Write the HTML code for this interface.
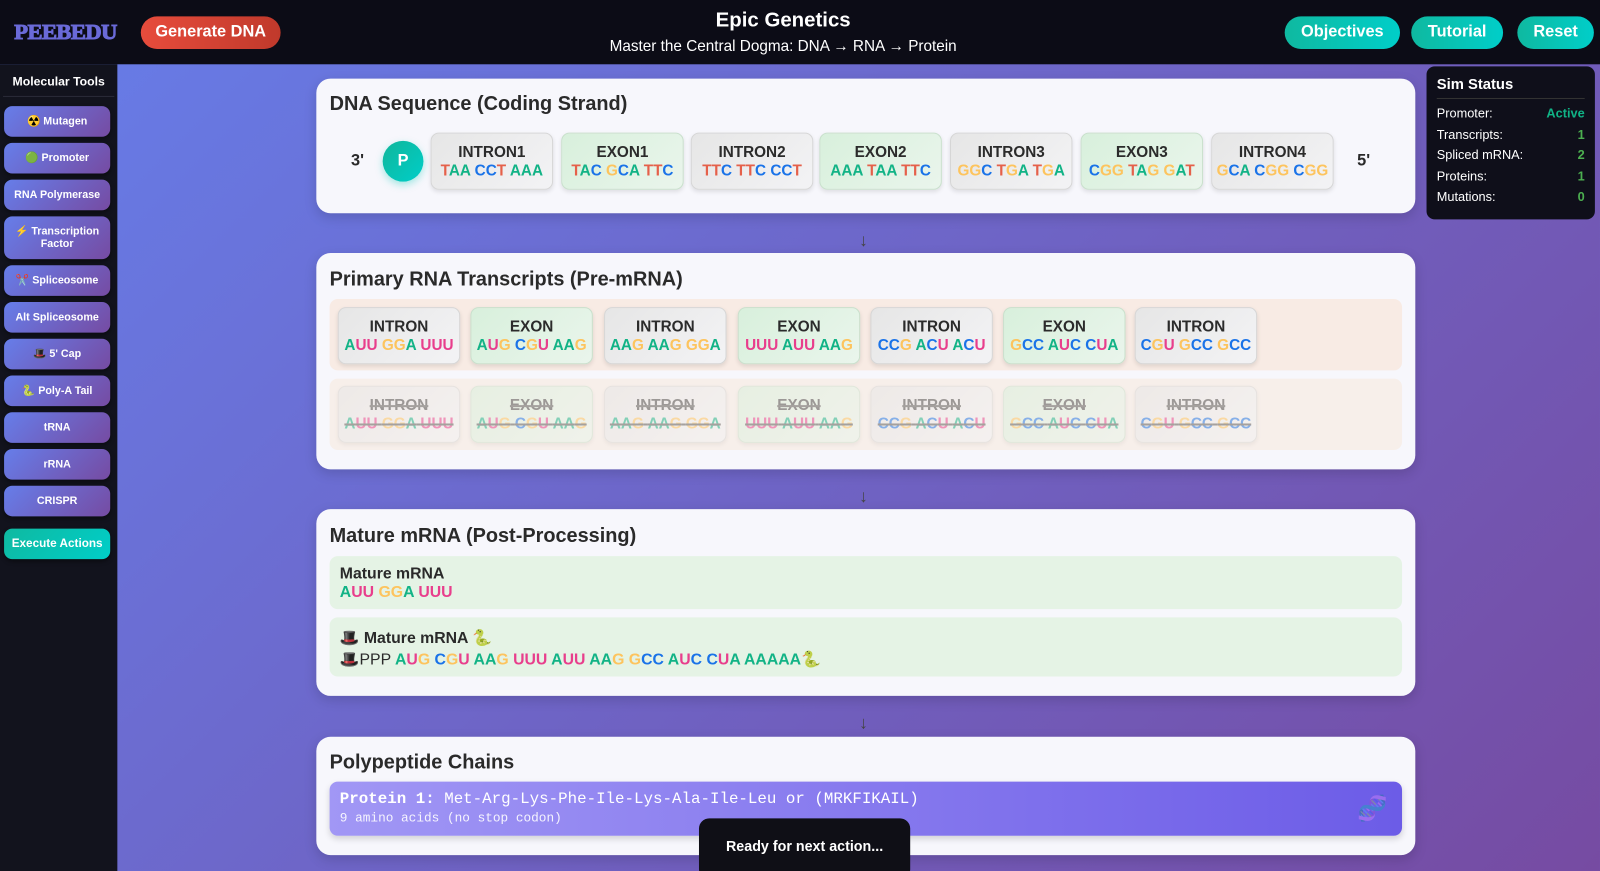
<!DOCTYPE html>
<html><head><meta charset="utf-8"><style>
*{box-sizing:border-box;margin:0;padding:0}
html,body{width:1600px;height:871px;overflow:hidden}
body{font-family:"Liberation Sans",sans-serif;background:linear-gradient(135deg,#667eea 0%,#764ba2 100%);position:relative}
#w{position:absolute;left:0;top:0;width:1568px;height:854px;transform:scale(1.020408);transform-origin:0 0}
i{font-style:normal}
.a{color:#12b386}.c{color:#1a73e8}.g{color:#fdc45e}.t{color:#e5604a}.u{color:#e83e8c}
header{position:absolute;left:0;top:0;width:1568px;height:63px;background:#0c0c16}
.logo{position:absolute;left:14px;top:19px;font-family:"Liberation Serif",serif;font-weight:900;font-size:21px;color:#6a6ad8;letter-spacing:-0.5px;-webkit-text-stroke:1px #6a6ad8;transform:scaleX(1.05);transform-origin:left}
.btn{position:absolute;top:16px;height:32px;border-radius:16px;color:#fff;font-weight:bold;font-size:16px;display:flex;align-items:center;justify-content:center}
.red{background:linear-gradient(90deg,#e74c3c,#c0392b)}
.teal{background:linear-gradient(90deg,#0fb9a0,#00cec9)}
.title{position:absolute;left:0;width:1535px;text-align:center;color:#fff}
side{position:absolute;left:0;top:63px;width:115px;height:808px;background:#12131d;display:block}
.st{color:#fff;font-weight:bold;font-size:12px;text-align:center;padding-bottom:7px;border-bottom:1px solid #2a2b38;margin:10px 3px 0}
.sb{position:absolute;left:4px;width:104px;height:30px;border-radius:8px;background:linear-gradient(135deg,#667eea,#764ba2);color:#fff;font-weight:bold;font-size:10.5px;display:flex;align-items:center;justify-content:center;text-align:center;line-height:12px;box-shadow:0 2px 4px rgba(0,0,0,.4)}
.panel{position:absolute;left:310px;width:1077px;background:#f7f7fc;border-radius:14px;box-shadow:0 4px 12px rgba(0,0,0,.15)}
.panel h2{position:absolute;left:13px;font-size:19.5px;color:#2a2a2a;font-weight:bold}
.card{position:absolute;width:120px;height:56px;border-radius:8px;text-align:center;font-weight:bold;border:1px solid #d6d6d6;box-shadow:0 2px 4px rgba(0,0,0,.1)}
.card .n{font-size:15px;color:#2b2b2b;margin-top:10px;line-height:17px}
.card .s{font-size:15px;line-height:19px}
.in{background:linear-gradient(135deg,#e6e6e6,#f3f3f5)}
.ex{background:linear-gradient(135deg,#d8f0dc,#eaf5ec);border-color:#c9e0cc}
.row{position:absolute;left:13px;width:1051px;height:70px;background:#f8ebe4;border-radius:8px}
.fd{opacity:.5}
.fd .n,.fd .s{text-decoration:line-through;text-decoration-color:#555;text-decoration-thickness:2px}
.fd .n{color:#444}
.arrow{position:absolute;left:842px;color:#444;font-size:17px}
.mm{position:absolute;left:13px;width:1051px;background:#e5f3e5;border-radius:8px;padding:9px 10px;font-size:15.5px;line-height:18px;font-weight:bold;color:#2a2a2a}
</style></head><body><div id="w">
<header>
<div class="logo">PEEBEDU</div>
<div class="btn red" style="left:138px;width:137px">Generate DNA</div>
<div class="title" style="top:9px;font-size:20px;font-weight:bold">Epic Genetics</div>
<div class="title" style="top:37px;font-size:15px">Master the Central Dogma: DNA → RNA → Protein</div>
<div class="btn teal" style="left:1259px;width:113px">Objectives</div>
<div class="btn teal" style="left:1383px;width:90px">Tutorial</div>
<div class="btn teal" style="left:1487px;width:75px">Reset</div>
</header>
<side>
<div class="st">Molecular Tools</div>
</side>
<div class="sb" style="top:104px">☢️ Mutagen</div>
<div class="sb" style="top:140px">🟢 Promoter</div>
<div class="sb" style="top:176px">RNA Polymerase</div>
<div class="sb" style="top:212px;height:42px">⚡ Transcription<br>Factor</div>
<div class="sb" style="top:260px">✂️ Spliceosome</div>
<div class="sb" style="top:296px">Alt Spliceosome</div>
<div class="sb" style="top:332px">🎩 5' Cap</div>
<div class="sb" style="top:368px">🐍 Poly-A Tail</div>
<div class="sb" style="top:404px">tRNA</div>
<div class="sb" style="top:440px">rRNA</div>
<div class="sb" style="top:476px">CRISPR</div>
<div class="sb" style="top:518px;background:linear-gradient(135deg,#0fb9a0,#00cec9);font-size:11.5px">Execute Actions</div>

<div class="panel" style="top:77px;height:132px">
<h2 style="top:14px">DNA Sequence (Coding Strand)</h2>
<div style="position:absolute;left:34px;top:72px;font-weight:bold;font-size:16px;color:#2a2a2a">3'</div>
<div style="position:absolute;left:65px;top:61px;width:40px;height:40px;border-radius:50%;background:linear-gradient(135deg,#10b69a,#00cec9);color:#fff;font-weight:bold;font-size:16px;display:flex;align-items:center;justify-content:center;box-shadow:0 3px 8px rgba(0,200,180,.35)">P</div>
<div style="position:absolute;left:1020px;top:72px;font-weight:bold;font-size:16px;color:#2a2a2a">5'</div>
<div class="card in" style="left:112px;top:53px"><div class="n">INTRON1</div><div class="s"><i class=t>T</i><i class=a>AA</i> <i class=c>CC</i><i class=t>T</i> <i class=a>AAA</i></div></div>
<div class="card ex" style="left:240px;top:53px"><div class="n">EXON1</div><div class="s"><i class=t>T</i><i class=a>A</i><i class=c>C</i> <i class=g>G</i><i class=c>C</i><i class=a>A</i> <i class=t>TT</i><i class=c>C</i></div></div>
<div class="card in" style="left:367px;top:53px"><div class="n">INTRON2</div><div class="s"><i class=t>TT</i><i class=c>C</i> <i class=t>TT</i><i class=c>C</i> <i class=c>CC</i><i class=t>T</i></div></div>
<div class="card ex" style="left:493px;top:53px"><div class="n">EXON2</div><div class="s"><i class=a>AAA</i> <i class=t>T</i><i class=a>AA</i> <i class=t>TT</i><i class=c>C</i></div></div>
<div class="card in" style="left:621px;top:53px"><div class="n">INTRON3</div><div class="s"><i class=g>GG</i><i class=c>C</i> <i class=t>T</i><i class=g>G</i><i class=a>A</i> <i class=t>T</i><i class=g>G</i><i class=a>A</i></div></div>
<div class="card ex" style="left:749px;top:53px"><div class="n">EXON3</div><div class="s"><i class=c>C</i><i class=g>GG</i> <i class=t>T</i><i class=a>A</i><i class=g>G</i> <i class=g>G</i><i class=a>A</i><i class=t>T</i></div></div>
<div class="card in" style="left:877px;top:53px"><div class="n">INTRON4</div><div class="s"><i class=g>G</i><i class=c>C</i><i class=a>A</i> <i class=c>C</i><i class=g>GG</i> <i class=c>C</i><i class=g>GG</i></div></div>
</div>
<div class="arrow" style="top:226px">↓</div>

<div class="panel" style="top:248px;height:212px">
<h2 style="top:15px">Primary RNA Transcripts (Pre-mRNA)</h2>
<div class="row" style="top:45px"></div>
<div class="row" style="top:123px;background:#f7efea"></div>
<div class="card in" style="left:21px;top:53px"><div class="n">INTRON</div><div class="s"><i class=a>A</i><i class=u>UU</i> <i class=g>GG</i><i class=a>A</i> <i class=u>UUU</i></div></div>
<div class="card ex" style="left:151px;top:53px"><div class="n">EXON</div><div class="s"><i class=a>A</i><i class=u>U</i><i class=g>G</i> <i class=c>C</i><i class=g>G</i><i class=u>U</i> <i class=a>AA</i><i class=g>G</i></div></div>
<div class="card in" style="left:282px;top:53px"><div class="n">INTRON</div><div class="s"><i class=a>AA</i><i class=g>G</i> <i class=a>AA</i><i class=g>G</i> <i class=g>GG</i><i class=a>A</i></div></div>
<div class="card ex" style="left:413px;top:53px"><div class="n">EXON</div><div class="s"><i class=u>UUU</i> <i class=a>A</i><i class=u>UU</i> <i class=a>AA</i><i class=g>G</i></div></div>
<div class="card in" style="left:543px;top:53px"><div class="n">INTRON</div><div class="s"><i class=c>CC</i><i class=g>G</i> <i class=a>A</i><i class=c>C</i><i class=u>U</i> <i class=a>A</i><i class=c>C</i><i class=u>U</i></div></div>
<div class="card ex" style="left:673px;top:53px"><div class="n">EXON</div><div class="s"><i class=g>G</i><i class=c>CC</i> <i class=a>A</i><i class=u>U</i><i class=c>C</i> <i class=c>C</i><i class=u>U</i><i class=a>A</i></div></div>
<div class="card in" style="left:802px;top:53px"><div class="n">INTRON</div><div class="s"><i class=c>C</i><i class=g>G</i><i class=u>U</i> <i class=g>G</i><i class=c>CC</i> <i class=g>G</i><i class=c>CC</i></div></div>

<div class="card in fd" style="left:21px;top:130px"><div class="n">INTRON</div><div class="s"><i class=a>A</i><i class=u>UU</i> <i class=g>GG</i><i class=a>A</i> <i class=u>UUU</i></div></div>
<div class="card ex fd" style="left:151px;top:130px"><div class="n">EXON</div><div class="s"><i class=a>A</i><i class=u>U</i><i class=g>G</i> <i class=c>C</i><i class=g>G</i><i class=u>U</i> <i class=a>AA</i><i class=g>G</i></div></div>
<div class="card in fd" style="left:282px;top:130px"><div class="n">INTRON</div><div class="s"><i class=a>AA</i><i class=g>G</i> <i class=a>AA</i><i class=g>G</i> <i class=g>GG</i><i class=a>A</i></div></div>
<div class="card ex fd" style="left:413px;top:130px"><div class="n">EXON</div><div class="s"><i class=u>UUU</i> <i class=a>A</i><i class=u>UU</i> <i class=a>AA</i><i class=g>G</i></div></div>
<div class="card in fd" style="left:543px;top:130px"><div class="n">INTRON</div><div class="s"><i class=c>CC</i><i class=g>G</i> <i class=a>A</i><i class=c>C</i><i class=u>U</i> <i class=a>A</i><i class=c>C</i><i class=u>U</i></div></div>
<div class="card ex fd" style="left:673px;top:130px"><div class="n">EXON</div><div class="s"><i class=g>G</i><i class=c>CC</i> <i class=a>A</i><i class=u>U</i><i class=c>C</i> <i class=c>C</i><i class=u>U</i><i class=a>A</i></div></div>
<div class="card in fd" style="left:802px;top:130px"><div class="n">INTRON</div><div class="s"><i class=c>C</i><i class=g>G</i><i class=u>U</i> <i class=g>G</i><i class=c>CC</i> <i class=g>G</i><i class=c>CC</i></div></div>
</div>
<div class="arrow" style="top:477px">↓</div>

<div class="panel" style="top:499px;height:183px">
<h2 style="top:15px">Mature mRNA (Post-Processing)</h2>
<div class="mm" style="top:46px;height:52px">Mature mRNA<br><i class=a>A</i><i class=u>UU</i> <i class=g>GG</i><i class=a>A</i> <i class=u>UUU</i></div>
<div class="mm" style="top:106px;height:58px;padding-top:10px;line-height:21px">🎩 Mature mRNA 🐍<br><span style="font-weight:normal">🎩PPP</span> <i class=a>A</i><i class=u>U</i><i class=g>G</i> <i class=c>C</i><i class=g>G</i><i class=u>U</i> <i class=a>AA</i><i class=g>G</i> <i class=u>UUU</i> <i class=a>A</i><i class=u>UU</i> <i class=a>AA</i><i class=g>G</i> <i class=g>G</i><i class=c>CC</i> <i class=a>A</i><i class=u>U</i><i class=c>C</i> <i class=c>C</i><i class=u>U</i><i class=a>A</i> <i class=a>AAAAA</i>🐍</div>
</div>
<div class="arrow" style="top:699px">↓</div>

<div class="panel" style="top:722px;height:116px">
<h2 style="top:14px">Polypeptide Chains</h2>
<div style="position:absolute;left:13px;top:44px;width:1051px;height:53px;border-radius:8px;background:linear-gradient(90deg,#a197f5,#6c5ce7);box-shadow:0 3px 6px rgba(0,0,0,.15);font-family:'Liberation Mono',monospace;color:#fff;padding:8px 10px">
<div style="font-size:15.5px"><b>Protein 1:</b> Met-Arg-Lys-Phe-Ile-Lys-Ala-Ile-Leu or (MRKFIKAIL)</div>
<div style="font-size:12.5px;margin-top:3px;opacity:.9">9 amino acids (no stop codon)</div>
<div style="position:absolute;right:14px;top:12px;font-size:24px;opacity:.35">🧬</div>
</div>
</div>

<div style="position:absolute;left:1398px;top:65px;width:165px;height:150px;background:#0f0f1a;border-radius:8px;color:#fff;padding:10px 10px">
<div style="font-weight:bold;font-size:14.5px;padding-bottom:5px;border-bottom:1px solid #333">Sim Status</div>
<div style="font-size:12.5px;line-height:20.5px;margin-top:4px">
<div style="display:flex;justify-content:space-between">Promoter:<b style="color:#10b386">Active</b></div>
<div style="display:flex;justify-content:space-between">Transcripts:<b style="color:#4caf50">1</b></div>
<div style="display:flex;justify-content:space-between">Spliced mRNA:<b style="color:#4caf50">2</b></div>
<div style="display:flex;justify-content:space-between">Proteins:<b style="color:#4caf50">1</b></div>
<div style="display:flex;justify-content:space-between">Mutations:<b style="color:#4caf50">0</b></div>
</div></div>

<div style="position:absolute;left:685px;top:802px;width:207px;height:60px;border-radius:10px;background:#0f0f16;color:#fff;font-weight:bold;font-size:14px;text-align:center;padding-top:19px">Ready for next action...</div>
</div></body></html>
